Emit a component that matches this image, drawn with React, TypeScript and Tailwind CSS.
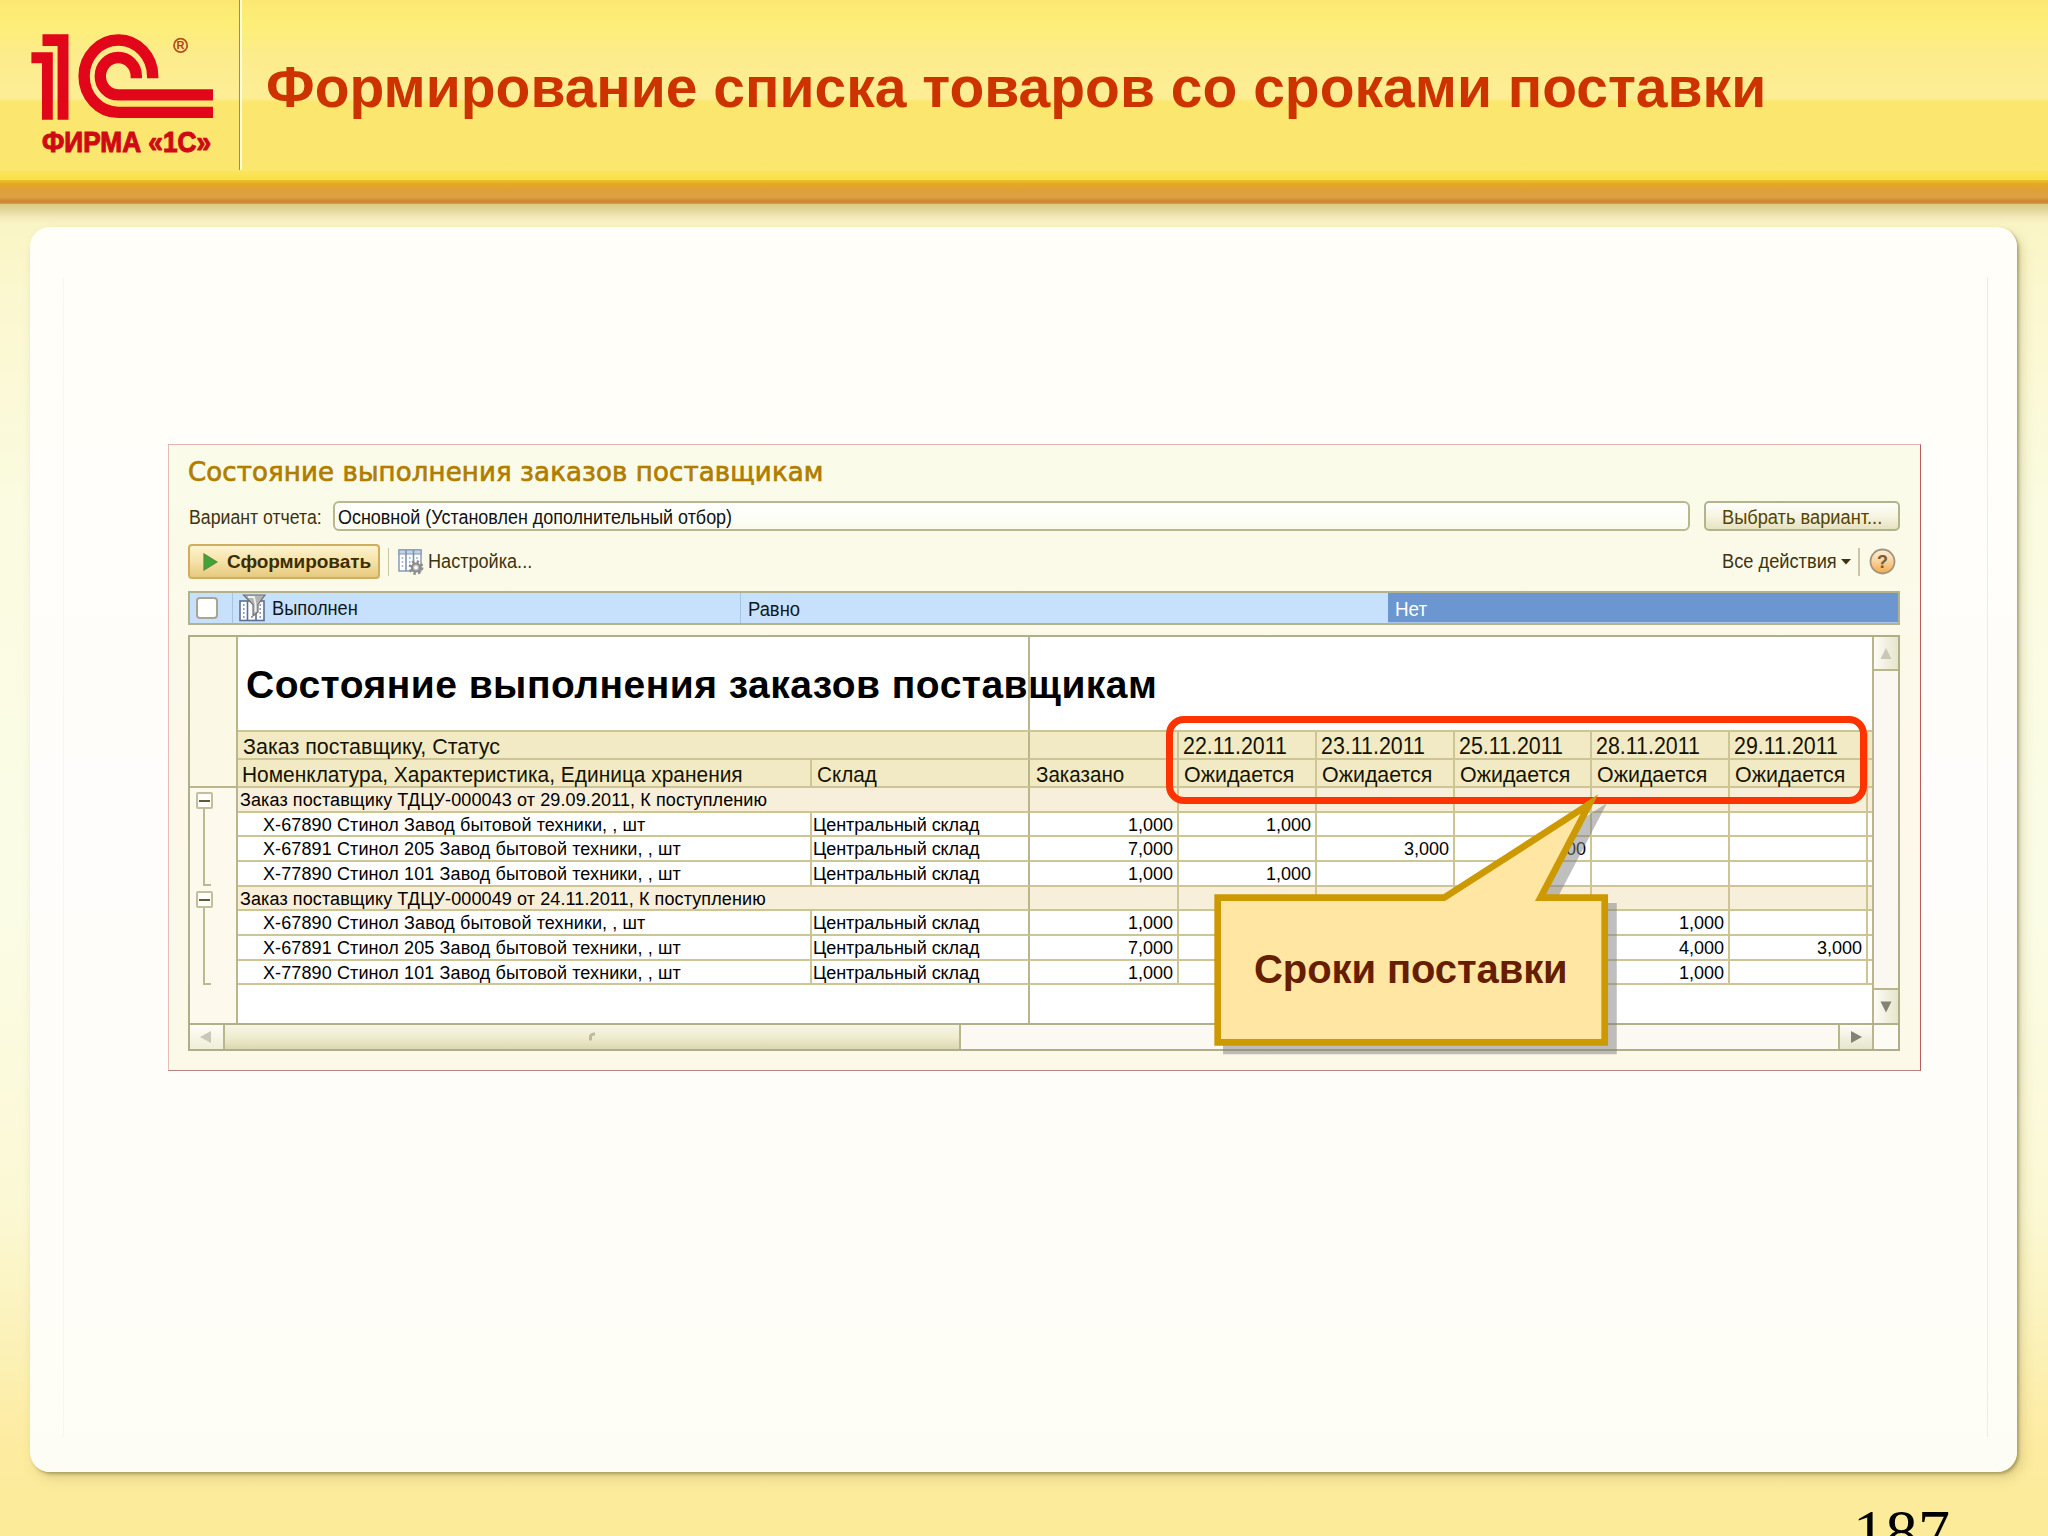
import type { ReactNode } from "react";

const dates = ["22.11.2011", "23.11.2011", "25.11.2011", "28.11.2011", "29.11.2011"];
const dateWidths = ["w-[138px]", "w-[138px]", "w-[137px]", "w-[138px]", "w-[138px]"];

type Item = { name: string; h: string; ordered: string; cells: string[] };
type Group = { title: string; h: string; items: Item[] };

const groups: Group[] = [
  {
    title: "Заказ поставщику ТДЦУ-000043 от 29.09.2011, К поступлению",
    h: "h-[25px]",
    items: [
      { name: "Х-67890 Стинол Завод бытовой техники, , шт", h: "h-[24px]", ordered: "1,000", cells: ["1,000", "", "", "", ""] },
      { name: "Х-67891 Стинол 205 Завод бытовой техники, , шт", h: "h-[25px]", ordered: "7,000", cells: ["", "3,000", "4,000", "", ""] },
      { name: "Х-77890 Стинол 101 Завод бытовой техники, , шт", h: "h-[25px]", ordered: "1,000", cells: ["1,000", "", "", "", ""] },
    ],
  },
  {
    title: "Заказ поставщику ТДЦУ-000049 от 24.11.2011, К поступлению",
    h: "h-[24px]",
    items: [
      { name: "Х-67890 Стинол Завод бытовой техники, , шт", h: "h-[25px]", ordered: "1,000", cells: ["", "", "", "1,000", ""] },
      { name: "Х-67891 Стинол 205 Завод бытовой техники, , шт", h: "h-[25px]", ordered: "7,000", cells: ["", "", "", "4,000", "3,000"] },
      { name: "Х-77890 Стинол 101 Завод бытовой техники, , шт", h: "h-[24px]", ordered: "1,000", cells: ["", "", "", "1,000", ""] },
    ],
  },
];

/** Horizontally condensed run of text. */
function T({ className = "", children }: { className?: string; children: ReactNode }) {
  return <span className={`inline-block origin-left whitespace-nowrap ${className}`}>{children}</span>;
}

function Logo() {
  return (
    <svg width="239" height="170" viewBox="0 0 239 170" className="shrink-0">
      <g fill="#e2061a">
        <path d="M42.5 34.3H68.5V119.7H57.6V46H42.5Z" />
        <path d="M31.4 52.3H52.8V119.7H42V63.3H31.4Z" />
      </g>
      <g fill="none" stroke="#e2061a" strokeWidth="11.4">
        <path d="M152.7 78.3V76.2A34.3 36.2 0 1 0 118.3 112.4H213" />
        <path d="M136.3 78.3V76.2A18 18.7 0 1 0 118.3 94.9H213" />
      </g>
      <ellipse cx="180.6" cy="45.4" rx="6.6" ry="6.8" fill="none" stroke="#b8501e" strokeWidth="1.8" />
      <text x="180.6" y="49.4" textAnchor="middle" fontSize="11" fontWeight="bold" fill="#b8401e">R</text>
      <text
        x="42"
        y="152.3"
        fontSize="29"
        fontWeight="bold"
        fill="#d00a14"
        stroke="#d00a14"
        strokeWidth="1.1"
        textLength="169"
        lengthAdjust="spacingAndGlyphs"
      >
        ФИРМА «1С»
      </text>
    </svg>
  );
}

function TableGearIcon() {
  return (
    <svg width="26" height="26" viewBox="0 0 26 26" className="shrink-0">
      <rect x="1" y="1" width="22" height="21" fill="#fff" stroke="#8094b4" strokeWidth="1.4" />
      <rect x="1" y="1" width="22" height="4" fill="#c5d3e6" stroke="#8094b4" strokeWidth="1" />
      <path d="M8 1V22M15.5 1V22" stroke="#7d92b2" strokeWidth="1.6" />
      <path d="M4.5 8V19M11.8 8V19M19 8V12" stroke="#a3b4cb" strokeWidth="1.5" strokeDasharray="2 2" />
      <circle cx="18" cy="18.5" r="5.8" fill="none" stroke="#8d8d8d" strokeWidth="3.2" strokeDasharray="2.3 2.25" />
      <circle cx="18" cy="18.5" r="4" fill="#c9c9c9" stroke="#8a8a8a" strokeWidth="2.2" />
      <circle cx="18" cy="18.5" r="1.6" fill="#fff" />
    </svg>
  );
}

function FilterIcon() {
  return (
    <svg width="27" height="28" viewBox="0 0 27 28" className="shrink-0">
      <rect x="1" y="7" width="24" height="19.5" fill="#fff" stroke="#5c6f90" strokeWidth="1.6" />
      <path d="M8.5 7V26M17 7V26" stroke="#5c6f90" strokeWidth="1.6" />
      <path d="M4.8 10V24M21.2 10V24M12.8 22V25" stroke="#8296b4" strokeWidth="1.5" strokeDasharray="2 2" />
      <path d="M4.5 1H26L19 10.5V18L14 22V10.5Z" fill="#b4b4b4" stroke="#707070" strokeWidth="1.2" />
      <path d="M9 3H15L16.5 10V18" fill="none" stroke="#efefef" strokeWidth="1.8" />
    </svg>
  );
}

function Triangle({ d, fill }: { d: string; fill: string }) {
  return (
    <svg width="14" height="14" viewBox="0 0 14 14" className="shrink-0">
      <path d={d} fill={fill} />
    </svg>
  );
}

function TreeNode() {
  return (
    <>
      <div className="ml-[6px] flex h-[17px] w-[17px] items-center justify-center rounded-[2px] border-2 border-[#c3bf9c] bg-[#fffef8]">
        <div className="h-[2px] w-[11px] bg-[#5f5a3a]" />
      </div>
      <div className="ml-[13px] h-[77px] w-[8px] border-b-2 border-l-2 border-[#bdb995]" />
    </>
  );
}

const line = "border-[#cdc594]";

function Cell({ w, className = "", children }: { w: string; className?: string; children?: ReactNode }) {
  return <div className={`shrink-0 border-b-2 border-r-2 ${line} ${w} ${className}`}>{children}</div>;
}

function ReportGrid() {
  return (
    <div className="flex h-[386px] w-[1634px] flex-col overflow-hidden bg-white text-black">
      <div className={`flex h-[95px] border-b-2 ${line}`}>
        <div className="w-[792px] shrink-0 border-r-2 border-[#b9b68c] pl-[8px]">
          <T className="relative z-10 text-[39px] font-bold leading-[95px] tracking-[0.477px]">
            Состояние выполнения заказов поставщикам
          </T>
        </div>
      </div>

      <div className="flex h-[28px] bg-[#f2eac5] text-[22px] leading-[29px] text-[#141200]">
        <Cell w="w-[792px]" className="border-r-[#b9b68c] pl-[5px]">
          <T className="scale-x-[0.975]">Заказ поставщику, Статус</T>
        </Cell>
        <Cell w="w-[149px]" />
        {dates.map((d, i) => (
          <Cell key={d} w={dateWidths[i]} className="pl-[4px]">
            <T className="scale-x-[0.93] text-[23px]">{d}</T>
          </Cell>
        ))}
        <div className={`flex-1 border-b-2 ${line}`} />
      </div>

      <div className="flex h-[28px] bg-[#f2eac5] text-[22px] leading-[29px] text-[#141200]">
        <Cell w="w-[574px]" className="pl-[4px]">
          <T className="scale-x-[0.95]">Номенклатура, Характеристика, Единица хранения</T>
        </Cell>
        <Cell w="w-[218px]" className="border-r-[#b9b68c] pl-[5px]">
          <T className="scale-x-[0.94]">Склад</T>
        </Cell>
        <Cell w="w-[149px]" className="pl-[6px]">
          <T className="scale-x-[0.935]">Заказано</T>
        </Cell>
        {dates.map((d, i) => (
          <Cell key={d} w={dateWidths[i]} className="pl-[5px]">
            <T className="scale-x-[0.972]">Ожидается</T>
          </Cell>
        ))}
        <div className={`flex-1 border-b-2 ${line}`} />
      </div>

      {groups.map((g) => (
        <div key={g.title} className="text-[18px] leading-[24px]">
          <div className={`flex bg-[#f7efda] ${g.h}`}>
            <Cell w="w-[792px]" className="border-r-[#b9b68c] pl-[2px] tracking-[0.107px]">{g.title}</Cell>
            <Cell w="w-[149px]" />
            {dates.map((d, i) => (
              <Cell key={d} w={dateWidths[i]} />
            ))}
            <div className={`flex-1 border-b-2 ${line}`} />
          </div>
          {g.items.map((it) => (
            <div key={it.name} className={`flex ${it.h}`}>
              <Cell w="w-[574px]" className="pl-[25px] tracking-[0.11px]">{it.name}</Cell>
              <Cell w="w-[218px]" className="border-r-[#b9b68c] pl-[1px] tracking-[-0.06px]">Центральный склад</Cell>
              <Cell w="w-[149px]" className="pr-[4px] text-right">{it.ordered}</Cell>
              {it.cells.map((c, i) => (
                <Cell key={i} w={dateWidths[i]} className="pr-[4px] text-right">{c}</Cell>
              ))}
              <div className={`flex-1 border-b-2 ${line}`} />
            </div>
          ))}
        </div>
      ))}
      <div className="w-[792px] flex-1 border-r-2 border-[#b9b68c]" />
    </div>
  );
}

function Toolbar() {
  return (
    <div className="mt-[13px] flex h-[35px] items-center text-[20px] leading-[35px] text-[#3d3510]">
      <div className="flex h-[35px] w-[192px] items-center gap-[9px] rounded-[4px] border-2 border-[#cfae62] bg-linear-to-b from-[#fdf3cf] via-[#f6e2a8] to-[#e6c97e] pl-[13px] leading-[31px] text-[#3c2e00]">
        <svg width="15" height="18" viewBox="0 0 15 18" className="shrink-0">
          <path d="M1 1L14 9L1 17Z" fill="#3fa535" stroke="#5c8a3c" strokeWidth="1.2" />
        </svg>
        <span className="text-[19px] font-bold tracking-[-0.05px]">Сформировать</span>
      </div>
      <div className="ml-[8px] h-[28px] w-px bg-[#c9c5a6]" />
      <div className="ml-[9px] flex w-[30px]">
        <TableGearIcon />
      </div>
      <T className="scale-x-[0.905]">Настройка...</T>
      <div className="ml-auto flex h-[35px] w-[178px] items-center">
        <div className="w-[119px]">
          <T className="scale-x-[0.912]">Все действия</T>
        </div>
        <svg width="10" height="6" viewBox="0 0 10 6" className="shrink-0">
          <path d="M0 0H10L5 5.6Z" fill="#3d3510" />
        </svg>
        <div className="ml-[7px] h-[28px] w-[2px] bg-[#c9c5a6]" />
        <svg width="27" height="27" viewBox="0 0 27 27" className="ml-[9px] shrink-0">
          <defs>
            <linearGradient id="help" x1="0" y1="0" x2="0" y2="1">
              <stop offset="0" stopColor="#fdf0dc" />
              <stop offset="0.5" stopColor="#f8d29c" />
              <stop offset="1" stopColor="#f5a94a" />
            </linearGradient>
          </defs>
          <circle cx="13.5" cy="13.5" r="12" fill="url(#help)" stroke="#a3947c" strokeWidth="1.8" />
          <text x="13.5" y="20" textAnchor="middle" fontSize="18" fontWeight="bold" fill="#7a5a34">?</text>
        </svg>
      </div>
    </div>
  );
}

function FilterRow() {
  return (
    <div className="mt-[12px] flex h-[34px] border-2 border-[#b2b38d] bg-[#c7e1fd] text-[20px] leading-[32px] text-[#101820]">
      <div className="flex w-[43px] items-center border-r border-[#a6c3e4] pl-[6px]">
        <div className="h-[22px] w-[22px] rounded-[4px] border-2 border-[#a8a590] bg-white" />
      </div>
      <div className="flex w-[508px] items-center gap-[6px] border-r border-[#a6c3e4] pl-[6px]">
        <FilterIcon />
        <T className="scale-x-[0.912]">Выполнен</T>
      </div>
      <div className="w-[647px] pl-[7px]">
        <T className="scale-x-[0.919]">Равно</T>
      </div>
      <div className="flex-1 border-b border-[#a8c6ee] bg-[#6c96d0] pl-[7px] text-white">
        <T className="scale-x-[0.942]">Нет</T>
      </div>
    </div>
  );
}

function ReportPanel() {
  return (
    <div className="mt-[10px] flex h-[416px] flex-col border-2 border-[#aeae88] bg-[#fdf9ec]">
      <div className="flex h-[386px]">
        <div className="flex w-[48px] shrink-0 flex-col border-r-2 border-[#b9b68c]">
          <div className="mb-[4px] h-[151px] border-b-2 border-[#b9b68c] bg-[#fcf8e6]" />
          <TreeNode />
          <div className="h-[5px]" />
          <TreeNode />
        </div>
        <ReportGrid />
        <div className="flex flex-1 flex-col justify-between border-l-2 border-[#b9b68c] bg-[#fbf8f2]">
          <div className="flex h-[34px] items-center justify-center border-b-2 border-[#b9b68c] bg-linear-to-r from-[#fdfcf4] to-[#e6e5cc]">
            <Triangle d="M7 2L12.5 13H1.5Z" fill="#c9c8b6" />
          </div>
          <div className="flex h-[35px] items-center justify-center border-t-2 border-[#b9b68c] bg-linear-to-r from-[#fdfcf4] to-[#e6e5cc]">
            <Triangle d="M7 12.5L12.5 1.5H1.5Z" fill="#838276" />
          </div>
        </div>
      </div>
      <div className="flex h-[26px] border-t-2 border-[#b2b08a]">
        <div className="flex w-[35px] items-center border-r-2 border-[#b9b68c] bg-linear-to-b from-[#fefdf6] to-[#efeed8] pl-[9px]">
          <Triangle d="M1 7L12 1V13Z" fill="#c9c8b6" />
        </div>
        <div className="flex w-[736px] items-center justify-center border-r-2 border-[#b9b68c] bg-linear-to-b from-[#f7f5e6] via-[#efedcf] to-[#dad8b2]">
          <svg width="10" height="14" viewBox="0 0 10 14">
            <path d="M3.5 10.5V6.5Q4 4 8 4" fill="none" stroke="#bdbb98" strokeWidth="3" />
          </svg>
        </div>
        <div className="flex-1 bg-[#fbf9f2]" />
        <div className="flex w-[36px] items-center justify-center border-x-2 border-[#b9b68c] bg-linear-to-b from-[#fefdf6] to-[#e6e5cc]">
          <Triangle d="M13 7L2 1V13Z" fill="#838276" />
        </div>
        <div className="w-[24px] bg-[#fdfcf4]" />
      </div>
    </div>
  );
}

function AppWindow() {
  return (
    <div className="ml-[104px] mt-[217px] h-[627px] w-[1753px] border border-b-[#b98080] border-l-[#e6bcb8] border-r-[#b85c5c] border-t-[#e6b4ae] bg-linear-to-b from-[#fafbe8] via-[#fdf8ea] to-[#fcf9e9] pl-[19px] pr-[20px]">
      <h2 className="h-[56px] whitespace-nowrap font-['DejaVu_Sans',sans-serif] text-[26px] leading-[55px] tracking-[0.13px] text-[#b07d00] [-webkit-text-stroke:0.7px_#b07d00]">
        Состояние выполнения заказов поставщикам
      </h2>
      <div className="flex h-[30px] text-[20px] leading-[33px] text-[#3d3510]">
        <div className="w-[145px] pl-px">
          <T className="scale-x-[0.885]">Вариант отчета:</T>
        </div>
        <div className="w-[1357px] rounded-[6px] border-2 border-[#b7b890] bg-linear-to-b from-white to-[#fbfcee] pl-[3px] leading-[29px] text-[#111]">
          <T className="scale-x-[0.8975]">Основной (Установлен дополнительный отбор)</T>
        </div>
        <div className="ml-[14px] w-[196px] rounded-[5px] border-2 border-[#b4b48c] bg-linear-to-b from-[#fffefb] via-[#f7f4e2] to-[#e6e2c0] pl-[16px] leading-[29px] text-[#544600]">
          <T className="scale-x-[0.912]">Выбрать вариант...</T>
        </div>
      </div>
      <Toolbar />
      <FilterRow />
      <ReportPanel />
    </div>
  );
}

function Callout() {
  const shape = "M7.7 107.7H234L379.5 14L330.5 107.7H394.7V252.3H7.7Z";
  return (
    <div className="absolute left-[1210px] top-[790px] h-[270px] w-[410px]">
      <svg width="410" height="270" viewBox="0 0 410 270" className="absolute inset-0">
        <g opacity="0.5" transform="translate(8.7 8.7)">
          <path d={shape} fill="#808080" stroke="#808080" strokeWidth="6.7" strokeMiterlimit="10" />
        </g>
        <path d={shape} fill="#ffe6a3" stroke="#cc9900" strokeWidth="6.7" strokeMiterlimit="10" />
      </svg>
      <div className="relative pl-[44px] pt-[108px] text-[40px] font-bold leading-[142px] tracking-[-0.09px] text-[#661e00]">
        Сроки поставки
      </div>
    </div>
  );
}

export default function App() {
  return (
    <div className="relative flex h-[1536px] w-[2048px] flex-col overflow-hidden bg-[#fceb9a] font-['Liberation_Sans',Arial,sans-serif]">
      <header className="flex h-[180px] shrink-0 bg-[linear-gradient(to_bottom,#fbe873_0px,#fdee76_22px,#fcec8c_56px,#fdee96_98px,#fbe76e_102px,#fbe670_160px,#fae76c_170px,#fae355_173px,#fbe04a_180px)]">
        <Logo />
        <div className="h-[170px] w-[3px] shrink-0 border-l border-[#c08a10] bg-[#fffbe0]" />
        <h1 className="whitespace-nowrap pl-[24px] text-[57px] font-bold leading-[175px] text-[#cc3300]">
          Формирование списка товаров со сроками поставки
        </h1>
      </header>
      <div className="h-[24px] shrink-0 bg-[linear-gradient(to_bottom,#efc22e_0px,#e5a722_4px,#dfa03a_10px,#dea045_17px,#cb832a_22px,#d9a260_24px)]" />
      <div className="flex-1 bg-[linear-gradient(to_bottom,#d8cb84_0px,#e3d79a_6px,#f3e9b8_13px,#faf5c6_20px,#fbf6c8_40px,#fbf7cf_90px,#fafbe0_300px,#fbfce6_700px,#fbf8d4_1000px,#fbf2ba_1130px,#fdeba0_1240px,#fceb98_1332px)]">
        <div className="ml-[30px] mt-[23px] flex h-[1245px] w-[1987px] rounded-[20px] bg-linear-to-b from-[#fffef8] via-[#fffdfb] to-[#fefdf5] shadow-[2px_2px_3px_rgba(120,110,60,0.5),5px_6px_12px_rgba(150,140,70,0.3)]">
          <div className="w-[33px]" />
          <div className="mb-[35px] mt-[50px] w-px bg-[#f8f6f0]" />
          <div className="flex-1">
            <AppWindow />
          </div>
          <div className="mb-[35px] mt-[50px] w-px bg-[#efece6]" />
          <div className="w-[29px]" />
        </div>
        <div className="pl-[1853px] font-['Liberation_Serif',serif] text-[64px] leading-[121px] tracking-[0.5px] text-black">187</div>
      </div>
      <div className="absolute left-[1166px] top-[716px] h-[88px] w-[701px] rounded-[18px] border-[7px] border-[#ff3300]" />
      <Callout />
    </div>
  );
}
